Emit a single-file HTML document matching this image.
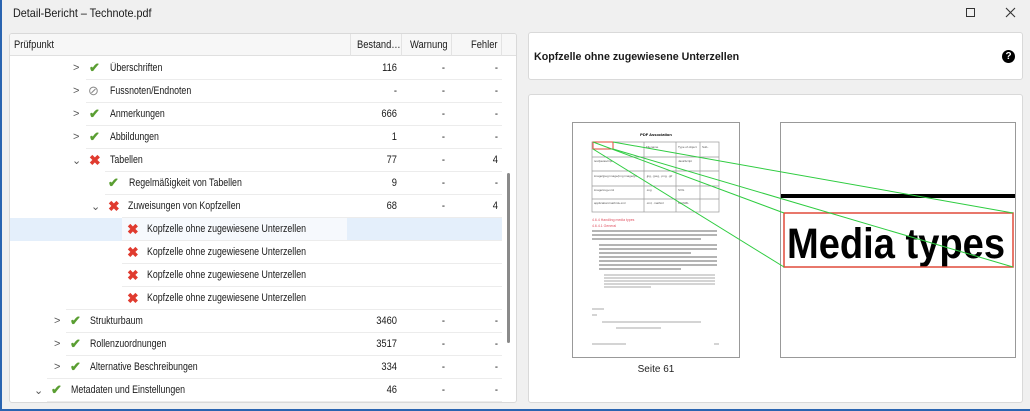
<!DOCTYPE html>
<html><head><meta charset="utf-8"><style>
*{margin:0;padding:0;box-sizing:border-box}
body{width:1030px;height:411px;overflow:hidden;background:#f0f0f0;font-family:"Liberation Sans",sans-serif;font-size:11px;color:#1a1a1a;position:relative}
.a{position:absolute}
.panel{position:absolute;background:#fff;border:1px solid #d9d9d9;border-radius:3px}
.row{position:absolute;left:0;width:492px;height:23px}
.row .ln{position:absolute;bottom:0;right:0;height:1px;background:#ececec}
.row span{position:absolute;top:5px;white-space:nowrap}
.t{transform:scaleX(.8);transform-origin:0 0}
.n{text-align:right;width:50px;transform:scaleX(.85);transform-origin:100% 0}
.chev{color:#555;font-size:11px}
.ok{color:#5a9e32;font-weight:bold;font-size:13px;top:3px!important}
.x{color:#e03b2f;font-weight:bold;font-size:14px;top:3px!important}
.h{transform:scaleX(.85);transform-origin:0 0;white-space:nowrap}
</style></head><body>
<div class="a" style="left:0;top:0;width:2px;height:411px;background:#2a64b0"></div>
<div class="a" style="left:0;top:409px;width:1030px;height:2px;background:#2a64b0"></div>
<div class="a h" style="left:13px;top:6px;font-size:12px;transform:scaleX(.9)">Detail-Bericht – Technote.pdf</div>
<div class="a" style="left:966px;top:8px;width:9px;height:9px;border:1px solid #333"></div>
<svg class="a" style="left:1005px;top:7px" width="11" height="11"><path d="M1 1L10 10M10 1L1 10" stroke="#333" stroke-width="1.1"/></svg>

<div class="panel" style="left:9px;top:33px;width:508px;height:370px;overflow:hidden">
 <div class="a" style="left:0;top:0;width:506px;height:22px;background:#f7f7f7;border-bottom:1px solid #e0e0e0"></div>
 <div class="a h" style="left:4px;top:5px">Prüfpunkt</div>
 <div class="a" style="left:340px;top:0;width:1px;height:22px;background:#e3e3e3"></div>
 <div class="a" style="left:391px;top:0;width:1px;height:22px;background:#e3e3e3"></div>
 <div class="a" style="left:441px;top:0;width:1px;height:22px;background:#e3e3e3"></div>
 <div class="a" style="left:491px;top:0;width:1px;height:22px;background:#e3e3e3"></div>
 <div class="a h" style="left:347px;top:5px">Bestand…</div>
 <div class="a h" style="left:400px;top:5px">Warnung</div>
 <div class="a h" style="left:461px;top:5px">Fehler</div>
 <div class="a" style="left:0;top:22px;width:508px;height:350px">
  <div class="row" style="top:1px"><span class="chev" style="left:63px">&gt;</span><span class="ok" style="left:79px">✔</span><span class="t" style="left:100px">Überschriften</span><span class="n" style="left:337px">116</span><span class="n" style="left:385px">-</span><span class="n" style="left:438px">-</span><div class="ln" style="left:76px"></div></div>
  <div class="row" style="top:24px"><span class="chev" style="left:63px">&gt;</span><span style="left:78px;top:3px;color:#888;font-size:13px">⊘</span><span class="t" style="left:100px">Fussnoten/Endnoten</span><span class="n" style="left:337px">-</span><span class="n" style="left:385px">-</span><span class="n" style="left:438px">-</span><div class="ln" style="left:76px"></div></div>
  <div class="row" style="top:47px"><span class="chev" style="left:63px">&gt;</span><span class="ok" style="left:79px">✔</span><span class="t" style="left:100px">Anmerkungen</span><span class="n" style="left:337px">666</span><span class="n" style="left:385px">-</span><span class="n" style="left:438px">-</span><div class="ln" style="left:76px"></div></div>
  <div class="row" style="top:70px"><span class="chev" style="left:63px">&gt;</span><span class="ok" style="left:79px">✔</span><span class="t" style="left:100px">Abbildungen</span><span class="n" style="left:337px">1</span><span class="n" style="left:385px">-</span><span class="n" style="left:438px">-</span><div class="ln" style="left:76px"></div></div>
  <div class="row" style="top:93px"><span class="chev" style="left:62px">⌄</span><span class="x" style="left:79px">✖</span><span class="t" style="left:100px">Tabellen</span><span class="n" style="left:337px">77</span><span class="n" style="left:385px">-</span><span class="n" style="left:438px">4</span><div class="ln" style="left:95px"></div></div>
  <div class="row" style="top:116px"><span class="ok" style="left:98px">✔</span><span class="t" style="left:119px">Regelmäßigkeit von Tabellen</span><span class="n" style="left:337px">9</span><span class="n" style="left:385px">-</span><span class="n" style="left:438px">-</span><div class="ln" style="left:95px"></div></div>
  <div class="row" style="top:139px"><span class="chev" style="left:81px">⌄</span><span class="x" style="left:98px">✖</span><span class="t" style="left:118px">Zuweisungen von Kopfzellen</span><span class="n" style="left:337px">68</span><span class="n" style="left:385px">-</span><span class="n" style="left:438px">4</span><div class="ln" style="left:112px"></div></div>
  <div class="row" style="top:162px;background:#e4effb"><div class="a" style="left:112px;top:0;width:225px;height:22px;background:#f6f9fd"></div><span class="x" style="left:117px">✖</span><span class="t" style="left:137px">Kopfzelle ohne zugewiesene Unterzellen</span><div class="ln" style="left:112px"></div></div>
  <div class="row" style="top:185px"><span class="x" style="left:117px">✖</span><span class="t" style="left:137px">Kopfzelle ohne zugewiesene Unterzellen</span><div class="ln" style="left:112px"></div></div>
  <div class="row" style="top:208px"><span class="x" style="left:117px">✖</span><span class="t" style="left:137px">Kopfzelle ohne zugewiesene Unterzellen</span><div class="ln" style="left:112px"></div></div>
  <div class="row" style="top:231px"><span class="x" style="left:117px">✖</span><span class="t" style="left:137px">Kopfzelle ohne zugewiesene Unterzellen</span><div class="ln" style="left:56px"></div></div>
  <div class="row" style="top:254px"><span class="chev" style="left:44px">&gt;</span><span class="ok" style="left:60px">✔</span><span class="t" style="left:80px">Strukturbaum</span><span class="n" style="left:337px">3460</span><span class="n" style="left:385px">-</span><span class="n" style="left:438px">-</span><div class="ln" style="left:56px"></div></div>
  <div class="row" style="top:277px"><span class="chev" style="left:44px">&gt;</span><span class="ok" style="left:60px">✔</span><span class="t" style="left:80px">Rollenzuordnungen</span><span class="n" style="left:337px">3517</span><span class="n" style="left:385px">-</span><span class="n" style="left:438px">-</span><div class="ln" style="left:56px"></div></div>
  <div class="row" style="top:300px"><span class="chev" style="left:44px">&gt;</span><span class="ok" style="left:60px">✔</span><span class="t" style="left:80px">Alternative Beschreibungen</span><span class="n" style="left:337px">334</span><span class="n" style="left:385px">-</span><span class="n" style="left:438px">-</span><div class="ln" style="left:37px"></div></div>
  <div class="row" style="top:323px"><span class="chev" style="left:24px">⌄</span><span class="ok" style="left:41px">✔</span><span class="t" style="left:61px">Metadaten und Einstellungen</span><span class="n" style="left:337px">46</span><span class="n" style="left:385px">-</span><span class="n" style="left:438px">-</span><div class="ln" style="left:37px"></div></div>
 </div>
 <div class="a" style="left:497px;top:139px;width:3px;height:170px;background:#8a8a8a;border-radius:2px"></div>
</div>

<div class="panel" style="left:528px;top:32px;width:495px;height:48px">
 <div class="a" style="left:5px;top:18px;font-weight:bold;font-size:11px;white-space:nowrap;transform:scaleX(.97);transform-origin:0 0">Kopfzelle ohne zugewiesene Unterzellen</div>
 <div class="a" style="left:473px;top:17px;width:13px;height:13px;border-radius:50%;background:#000;color:#fff;font-weight:bold;font-size:10px;text-align:center;line-height:13px">?</div>
</div>

<div class="panel" style="left:528px;top:94px;width:495px;height:309px">
 <svg class="a" style="left:0;top:0" width="495" height="309" viewBox="528 94 495 309">
  <rect x="571.5" y="121.5" width="167" height="235" fill="#fff" stroke="#999"/>
  <text x="655" y="135" font-size="4" font-weight="bold" text-anchor="middle" font-family="Liberation Sans">PDF Association</text>
  <g stroke="#999" stroke-width="0.7" fill="none">
   <rect x="591" y="141" width="127" height="70"/>
   <line x1="591" y1="156" x2="718" y2="156"/><line x1="591" y1="170" x2="718" y2="170"/><line x1="591" y1="185" x2="718" y2="185"/><line x1="591" y1="198" x2="718" y2="198"/>
   <line x1="643" y1="141" x2="643" y2="211"/><line x1="675" y1="141" x2="675" y2="211"/><line x1="699" y1="141" x2="699" y2="211"/>
  </g>
  <g font-size="3" fill="#555" font-family="Liberation Sans">
   <text x="645" y="147">Filename</text><text x="677" y="147">Type of object</text><text x="701" y="147">Sub-</text>
   <text x="593" y="161">text/javascript</text><text x="677" y="161">JavaScript</text>
   <text x="593" y="176">image/jpeg image/png image/gif</text><text x="645" y="176">.jpg, .jpeg, .png, .gif</text>
   <text x="593" y="190">image/svg+xml</text><text x="645" y="190">.svg</text><text x="677" y="190">SVG</text>
   <text x="593" y="203">application/mathml+xml</text><text x="645" y="203">.xml, .mathml</text><text x="677" y="203">MathML</text>
  </g>
  <text x="591" y="220" font-size="3.5" fill="#e05060" font-family="Liberation Sans">4.6.4 Handling media types</text>
  <text x="591" y="226" font-size="3.5" fill="#e05060" font-family="Liberation Sans">4.6.4.1 General</text>
  <g stroke="#888" stroke-width="1.3">
   <line x1="591" y1="230" x2="716" y2="230"/><line x1="591" y1="234" x2="716" y2="234"/><line x1="591" y1="238" x2="700" y2="238"/>
   <line x1="598" y1="244" x2="716" y2="244"/><line x1="598" y1="248" x2="716" y2="248"/><line x1="598" y1="252" x2="690" y2="252"/>
   <line x1="598" y1="256" x2="716" y2="256"/><line x1="598" y1="260" x2="716" y2="260"/><line x1="598" y1="264" x2="716" y2="264"/><line x1="598" y1="268" x2="680" y2="268"/>
  </g>
  <g stroke="#aaa" stroke-width="1">
   <line x1="603" y1="274" x2="714" y2="274"/><line x1="603" y1="277" x2="714" y2="277"/><line x1="603" y1="280" x2="714" y2="280"/><line x1="603" y1="283" x2="714" y2="283"/><line x1="603" y1="286" x2="650" y2="286"/>
   <line x1="591" y1="308" x2="603" y2="308"/><line x1="591" y1="314" x2="596" y2="314"/>
   <line x1="601" y1="321" x2="700" y2="321"/><line x1="615" y1="327" x2="660" y2="327"/>
   <line x1="591" y1="343" x2="625" y2="343"/><line x1="713" y1="343" x2="718" y2="343"/>
  </g>
  <rect x="779.5" y="121.5" width="235" height="235" fill="#fff" stroke="#999"/>
  <rect x="780" y="193" width="234" height="4" fill="#000"/>
  <text x="786" y="257" font-size="43" font-weight="bold" font-family="Liberation Sans, sans-serif" textLength="218" lengthAdjust="spacingAndGlyphs">Media types</text>
  <rect x="783" y="212" width="229" height="54" fill="none" stroke="#e04a3a" stroke-width="1.5"/>
  <rect x="592" y="141" width="20" height="7" fill="none" stroke="#e04a3a" stroke-width="1"/>
  <g stroke="#2ecc40" stroke-width="1">
   <line x1="592" y1="141" x2="783" y2="212"/><line x1="612" y1="141" x2="1012" y2="212"/>
   <line x1="592" y1="148" x2="783" y2="266"/><line x1="612" y1="148" x2="1012" y2="266"/>
  </g>
  <text x="655" y="371" font-size="10" text-anchor="middle" fill="#222" font-family="Liberation Sans">Seite 61</text>
 </svg>
</div>
</body></html>
